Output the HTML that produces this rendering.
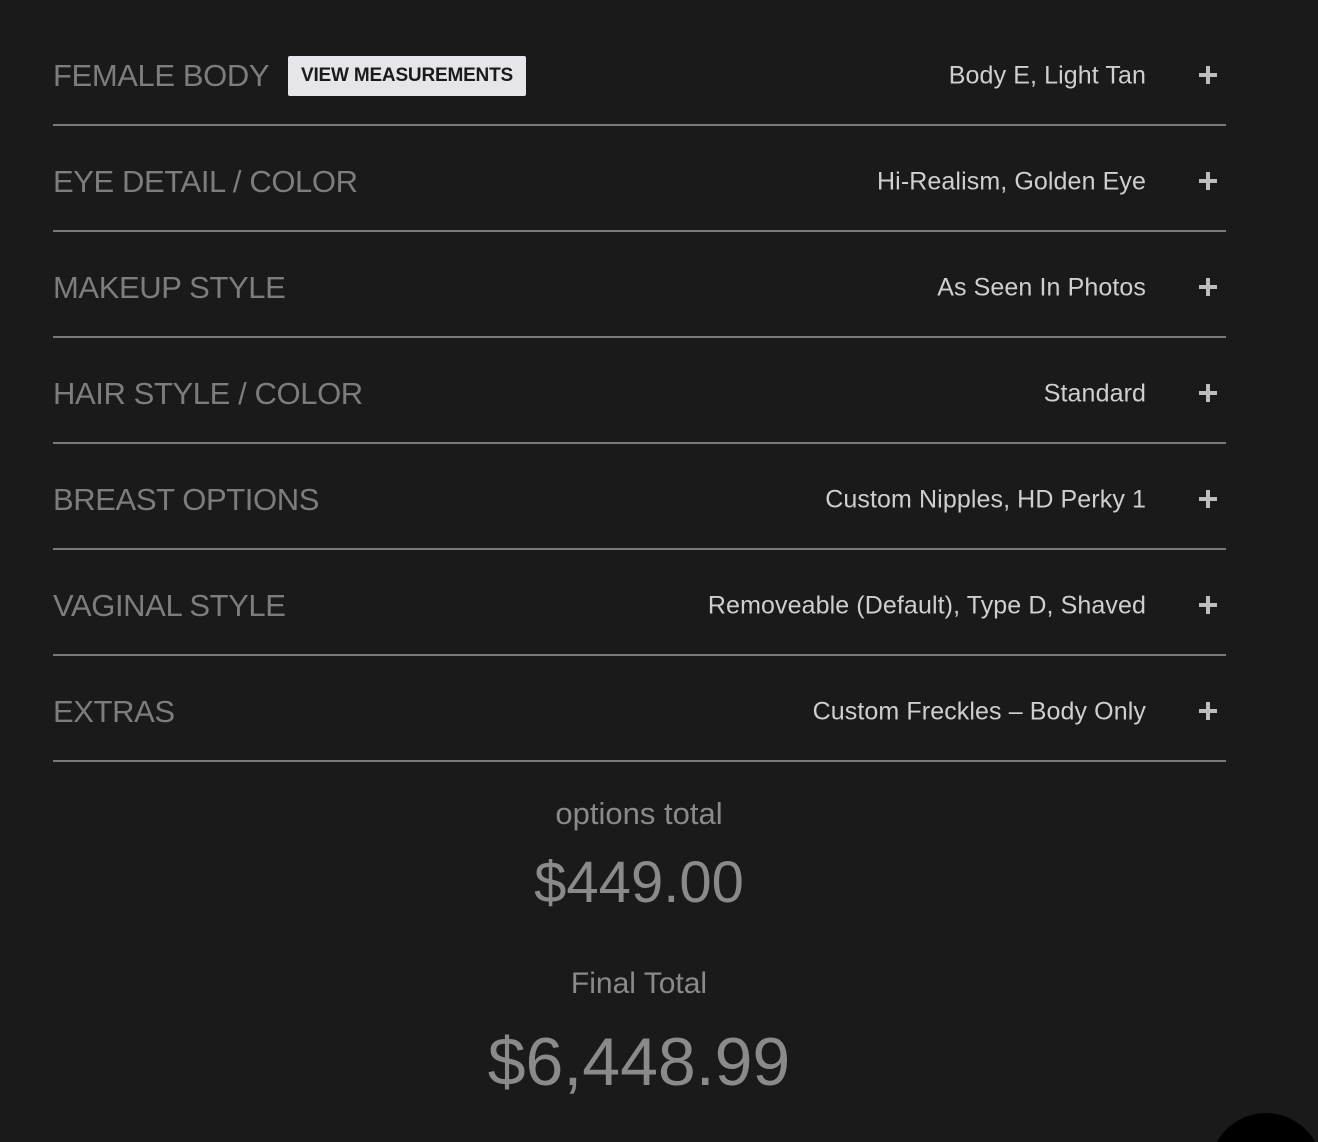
<!DOCTYPE html>
<html style="overflow:hidden;height:1142px"><head><style>
html,body{margin:0;padding:0}
body{width:1318px;height:1142px;background:#1a1a1a;overflow:hidden;position:relative;font-family:"Liberation Sans",sans-serif}
.row{position:absolute;left:53px;width:1173px;height:106px;border-bottom:2px solid #7a7a7a;box-sizing:border-box}
.lab{position:absolute;left:0;top:56px;transform:translateY(-50%);font-size:31px;color:#7d7d7d;white-space:nowrap;letter-spacing:-0.4px}
.val{position:absolute;right:80px;top:56px;transform:translateY(-50%);font-size:25px;color:#cfcfcf;white-space:nowrap;letter-spacing:0.1px}
.plus{position:absolute;right:9px;top:55px;width:18px;height:18px;transform:translateY(-50%)}
.plus:before{content:"";position:absolute;left:0;top:7px;width:18px;height:4px;background:#bdbdbd}
.plus:after{content:"";position:absolute;left:7px;top:0;width:4px;height:18px;background:#bdbdbd}
.btn{position:absolute;left:235px;top:56px;transform:translateY(-50%);background:#e6e6ea;color:#1a1a1a;font-weight:bold;font-size:19px;padding:9px 13px;border-radius:2px;letter-spacing:-0.2px}
.c{position:absolute;left:0;width:1278px;text-align:center;color:#8a8a8a;line-height:1.1}
</style></head><body>
<div class="row" style="top:20px"><div class="lab">FEMALE BODY</div><div class="btn">VIEW MEASUREMENTS</div><div class="val">Body E, Light Tan</div><div class="plus"></div></div>
<div class="row" style="top:126px"><div class="lab">EYE DETAIL / COLOR</div><div class="val">Hi-Realism, Golden Eye</div><div class="plus"></div></div>
<div class="row" style="top:232px"><div class="lab">MAKEUP STYLE</div><div class="val">As Seen In Photos</div><div class="plus"></div></div>
<div class="row" style="top:338px"><div class="lab">HAIR STYLE / COLOR</div><div class="val">Standard</div><div class="plus"></div></div>
<div class="row" style="top:444px"><div class="lab">BREAST OPTIONS</div><div class="val">Custom Nipples, HD Perky 1</div><div class="plus"></div></div>
<div class="row" style="top:550px"><div class="lab">VAGINAL STYLE</div><div class="val">Removeable (Default), Type D, Shaved</div><div class="plus"></div></div>
<div class="row" style="top:656px"><div class="lab">EXTRAS</div><div class="val">Custom Freckles – Body Only</div><div class="plus"></div></div>
<div class="c" style="top:797px;font-size:31px">options total</div>
<div class="c" style="top:851px;font-size:58px">$449.00</div>
<div class="c" style="top:967px;font-size:30px">Final Total</div>
<div class="c" style="top:1025px;font-size:68px">$6,448.99</div>
<div style="position:absolute;left:1210px;top:1113px;width:108px;height:29px;overflow:hidden"><div style="width:112px;height:112px;border-radius:50%;background:#000"></div></div>
</body></html>
